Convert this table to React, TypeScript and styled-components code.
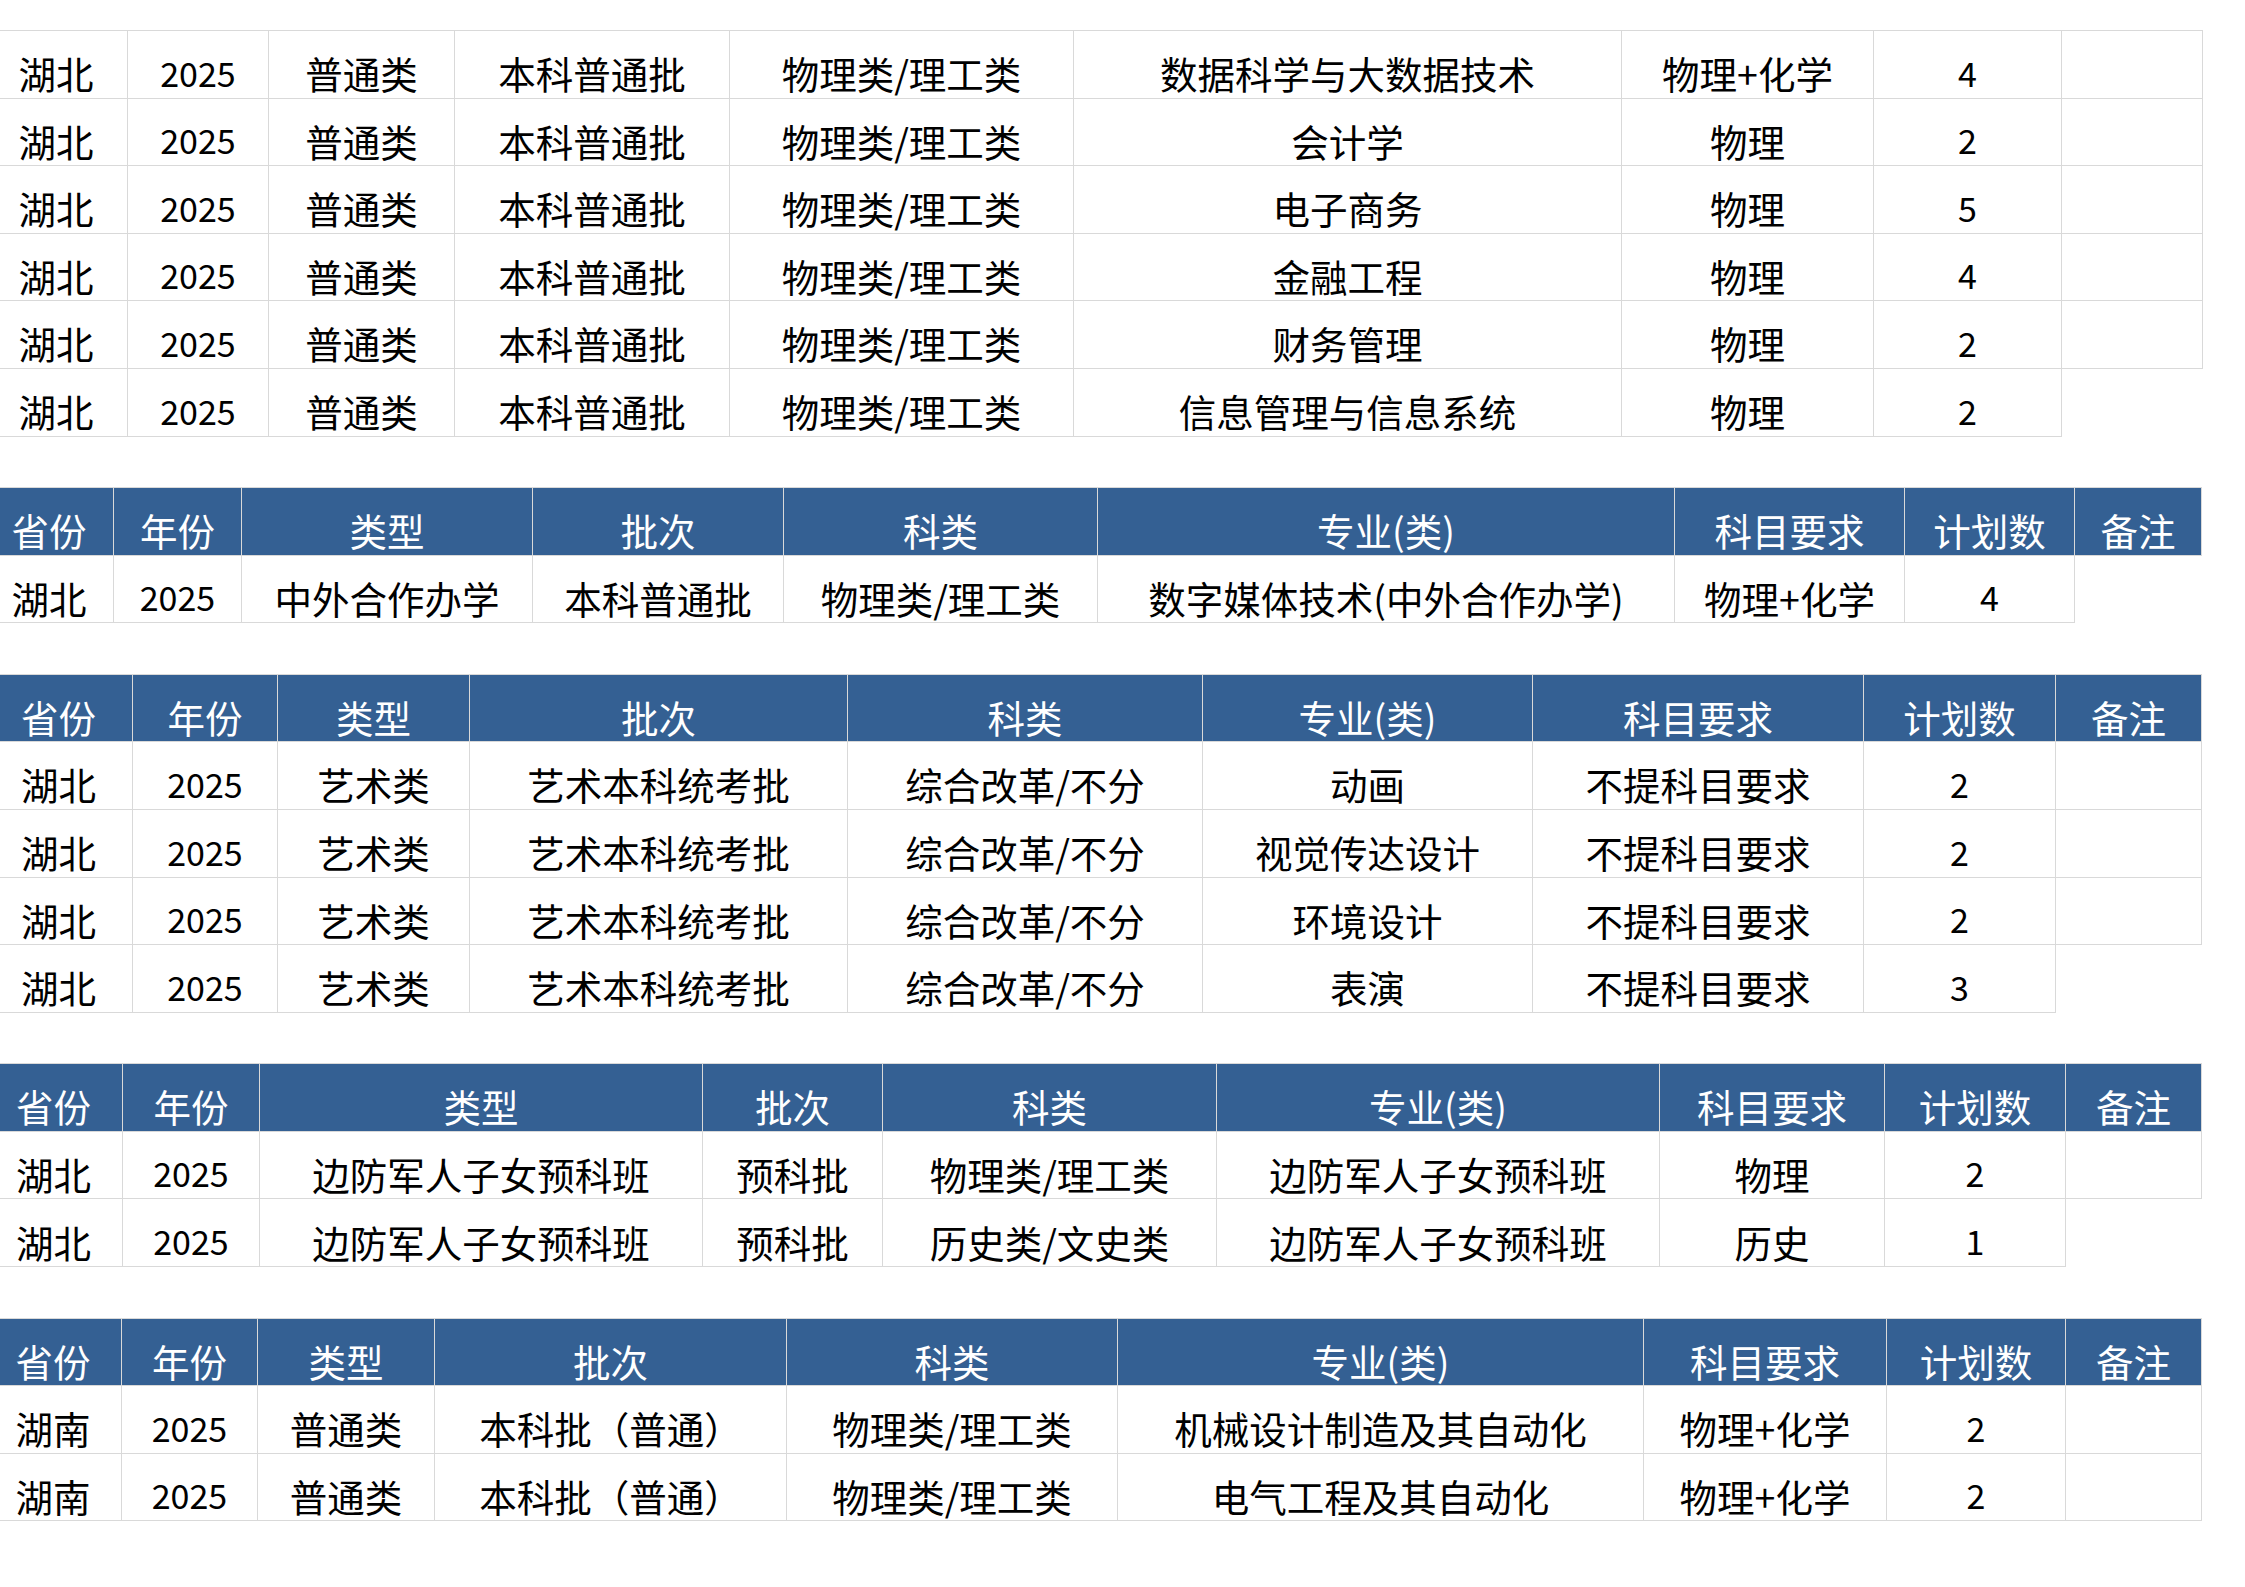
import styled, { createGlobalStyle } from "styled-components";

const GlobalStyle = createGlobalStyle`
  html, body {
    margin: 0;
    padding: 0;
    background: #ffffff;
  }
  body {
    font-family: "Noto Sans CJK SC", "Noto Sans", sans-serif;
  }
`;

const Page = styled.div`
  width: 2245px;
  min-height: 1587px;
  box-sizing: border-box;
  padding-top: 30px;
  display: flex;
  flex-direction: column;
  gap: 50.5px;
`;

const Sheet = styled.div<{ $cols: number[] }>`
  display: grid;
  grid-template-columns: ${(p) => p.$cols.map((c) => `${c}px`).join(" ")};
  grid-auto-rows: 67.6px;
  width: max-content;
  border-top: 1px solid #d9d9d9;
`;

const Cell = styled.div<{ $open?: boolean; $num?: boolean }>`
  display: flex;
  align-items: flex-end;
  justify-content: center;
  box-sizing: border-box;
  padding-bottom: ${(p) => (p.$num ? "8px" : "6px")};
  border-right: 1px solid ${(p) => (p.$open ? "transparent" : "#d9d9d9")};
  border-bottom: 1px solid ${(p) => (p.$open ? "transparent" : "#d9d9d9")};
  color: #000000;
  font-size: ${(p) => (p.$num ? "34px" : "37.5px")};
  font-weight: 400;
  line-height: 1;
  white-space: nowrap;
  &:nth-child(9n + 1) {
    padding-right: 15px;
  }
`;

const HeadCell = styled(Cell)`
  background: #346093;
  color: #ffffff;
`;

const HEAD = ["省份", "年份", "类型", "批次", "科类", "专业(类)", "科目要求", "计划数", "备注"];

type Block = {
  cols: number[];
  header: boolean;
  rows: string[][];
  // last row's 备注 cell has no borders
  openLast: boolean;
};

const hb = ["湖北", "2025"];

const blocks: Block[] = [
  {
    cols: [128, 141, 186, 275, 344, 548, 252, 188, 141],
    header: false,
    openLast: true,
    rows: [
      [...hb, "普通类", "本科普通批", "物理类/理工类", "数据科学与大数据技术", "物理+化学", "4", ""],
      [...hb, "普通类", "本科普通批", "物理类/理工类", "会计学", "物理", "2", ""],
      [...hb, "普通类", "本科普通批", "物理类/理工类", "电子商务", "物理", "5", ""],
      [...hb, "普通类", "本科普通批", "物理类/理工类", "金融工程", "物理", "4", ""],
      [...hb, "普通类", "本科普通批", "物理类/理工类", "财务管理", "物理", "2", ""],
      [...hb, "普通类", "本科普通批", "物理类/理工类", "信息管理与信息系统", "物理", "2", ""],
    ],
  },
  {
    cols: [114, 128, 291, 251, 314, 577, 230, 170, 127],
    header: true,
    openLast: true,
    rows: [[...hb, "中外合作办学", "本科普通批", "物理类/理工类", "数字媒体技术(中外合作办学)", "物理+化学", "4", ""]],
  },
  {
    cols: [133, 145, 192, 378, 355, 330, 331, 192, 146],
    header: true,
    openLast: true,
    rows: [
      [...hb, "艺术类", "艺术本科统考批", "综合改革/不分", "动画", "不提科目要求", "2", ""],
      [...hb, "艺术类", "艺术本科统考批", "综合改革/不分", "视觉传达设计", "不提科目要求", "2", ""],
      [...hb, "艺术类", "艺术本科统考批", "综合改革/不分", "环境设计", "不提科目要求", "2", ""],
      [...hb, "艺术类", "艺术本科统考批", "综合改革/不分", "表演", "不提科目要求", "3", ""],
    ],
  },
  {
    cols: [123, 137, 443, 180, 334, 443, 225, 181, 136],
    header: true,
    openLast: true,
    rows: [
      [...hb, "边防军人子女预科班", "预科批", "物理类/理工类", "边防军人子女预科班", "物理", "2", ""],
      [...hb, "边防军人子女预科班", "预科批", "历史类/文史类", "边防军人子女预科班", "历史", "1", ""],
    ],
  },
  {
    cols: [122, 136, 177, 352, 331, 526, 243, 179, 136],
    header: true,
    openLast: false,
    rows: [
      ["湖南", "2025", "普通类", "本科批（普通）", "物理类/理工类", "机械设计制造及其自动化", "物理+化学", "2", ""],
      ["湖南", "2025", "普通类", "本科批（普通）", "物理类/理工类", "电气工程及其自动化", "物理+化学", "2", ""],
    ],
  },
];

const isNum = (v: string) => /^\d+$/.test(v);

export default function App() {
  return (
    <>
      <GlobalStyle />
      <Page>
        {blocks.map((b, bi) => (
          <Sheet key={bi} $cols={b.cols}>
            {b.header && HEAD.map((h) => <HeadCell key={h}>{h}</HeadCell>)}
            {b.rows.map((row, ri) =>
              row.map((v, ci) => (
                <Cell
                  key={`${ri}-${ci}`}
                  $num={isNum(v)}
                  $open={b.openLast && ri === b.rows.length - 1 && ci === 8}
                >
                  {v}
                </Cell>
              ))
            )}
          </Sheet>
        ))}
      </Page>
    </>
  );
}
